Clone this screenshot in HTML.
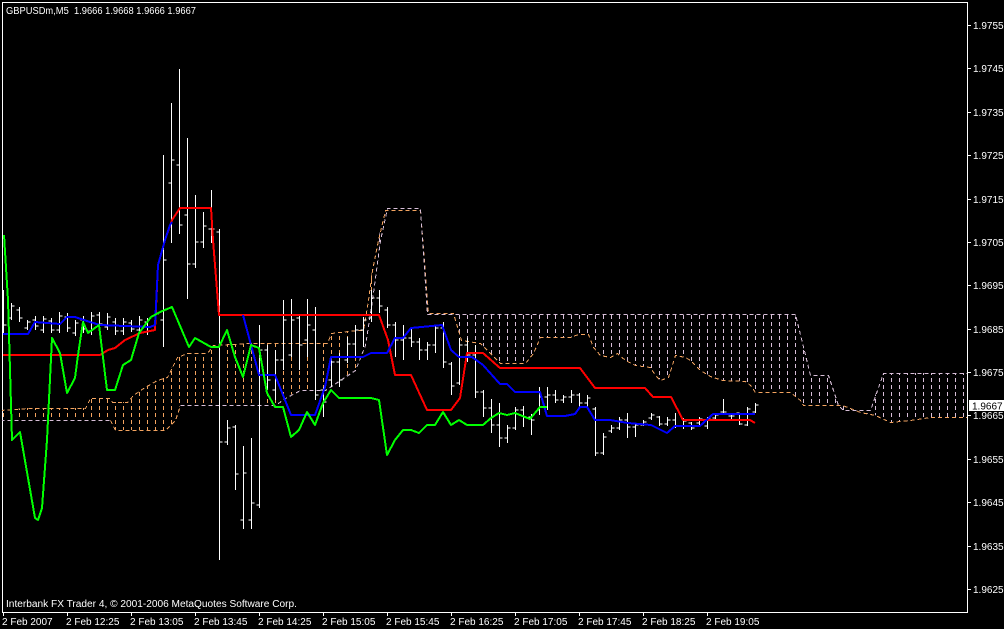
<!DOCTYPE html>
<html><head><meta charset="utf-8"><style>
html,body{margin:0;padding:0;background:#000;}
svg{display:block}
text{font-family:"Liberation Sans","DejaVu Sans",sans-serif;font-size:10px;fill:#fff}
</style></head><body>
<svg width="1004" height="629" viewBox="0 0 1004 629" xmlns="http://www.w3.org/2000/svg" shape-rendering="crispEdges">
<defs>
<pattern id="po" patternUnits="userSpaceOnUse" x="0" y="0" width="8" height="7"><line x1="3.5" y1="0" x2="3.5" y2="4" stroke="#f4a460" stroke-width="1"/></pattern>
<pattern id="pt" patternUnits="userSpaceOnUse" x="0" y="0" width="8" height="7"><line x1="3.5" y1="0" x2="3.5" y2="4" stroke="#d8bfd8" stroke-width="1"/></pattern>
<clipPath id="cl"><rect x="0" y="0" width="372" height="629"/></clipPath>
<clipPath id="cr"><rect x="372" y="0" width="600" height="629"/></clipPath>
<clipPath id="plot"><rect x="2" y="2" width="965" height="610"/></clipPath>
</defs>
<rect width="1004" height="629" fill="#000"/>
<path d="M2.5 2.5H967.5V612.5H2.5Z" fill="none" stroke="#fff"/>
<g clip-path="url(#plot)">
<g id="cloud">
<polygon clip-path="url(#cl)" fill="url(#po)" fill-rule="evenodd" points="0,410 28,408 85,408 90,398 110,398 112,402 127,402 133,395 143,388 157,380 167,377 177,357 187,353 207,353 213,345 250,343 327,343 331,333 357,330 363,330 368,300 372,270 378,240 385,210 420,210 428,313 453,313 461,340 480,343 500,363 525,363 533,353 540,337 570,337 578,334 588,334 593,347 600,355 610,357 617,353 625,360 635,365 650,367 655,375 660,380 668,377 675,355 685,357 690,360 700,370 710,376 722,380 745,381 750,385 755,392 790,392 800,400 803,405 842,405 850,408 860,412 875,415 890,422 910,420 930,417 968,417 968,373 883,373 870,410 843,410 838,405 828,375 810,375 795,314 427,314 420,208 387,208 380,240 372,300 365,345 355,370 340,380 325,390 300,390 285,398 275,405 180,405 175,420 165,430 115,430 110,420 0,420"/>
<polygon clip-path="url(#cr)" fill="url(#pt)" fill-rule="evenodd" points="0,410 28,408 85,408 90,398 110,398 112,402 127,402 133,395 143,388 157,380 167,377 177,357 187,353 207,353 213,345 250,343 327,343 331,333 357,330 363,330 368,300 372,270 378,240 385,210 420,210 428,313 453,313 461,340 480,343 500,363 525,363 533,353 540,337 570,337 578,334 588,334 593,347 600,355 610,357 617,353 625,360 635,365 650,367 655,375 660,380 668,377 675,355 685,357 690,360 700,370 710,376 722,380 745,381 750,385 755,392 790,392 800,400 803,405 842,405 850,408 860,412 875,415 890,422 910,420 930,417 968,417 968,373 883,373 870,410 843,410 838,405 828,375 810,375 795,314 427,314 420,208 387,208 380,240 372,300 365,345 355,370 340,380 325,390 300,390 285,398 275,405 180,405 175,420 165,430 115,430 110,420 0,420"/>
</g>
<g transform="translate(0.5,0.5)">
<polyline fill="none" stroke="#f4a460" stroke-dasharray="4,3" points="0,410 28,408 85,408 90,398 110,398 112,402 127,402 133,395 143,388 157,380 167,377 177,357 187,353 207,353 213,345 250,343 327,343 331,333 357,330 363,330 368,300 372,270 378,240 385,210 420,210 428,313 453,313 461,340 480,343 500,363 525,363 533,353 540,337 570,337 578,334 588,334 593,347 600,355 610,357 617,353 625,360 635,365 650,367 655,375 660,380 668,377 675,355 685,357 690,360 700,370 710,376 722,380 745,381 750,385 755,392 790,392 800,400 803,405 842,405 850,408 860,412 875,415 890,422 910,420 930,417 968,417"/>
<polyline fill="none" stroke="#d8bfd8" stroke-dasharray="4,3" points="0,420 110,420"/>
<polyline fill="none" stroke="#f4a460" stroke-dasharray="4,3" points="110,420 115,430 165,430 175,420 180,405"/>
<polyline fill="none" stroke="#d8bfd8" stroke-dasharray="4,3" points="180,405 275,405 285,398 300,390 325,390 340,380 355,370 365,345 372,300 380,240 387,208 420,208 427,314 795,314 810,375 828,375 838,405 843,410 870,410 883,373 968,373"/>
</g>
<path fill="none" stroke="#fff" stroke-width="1" d="
M3.5 290V335M0.5 305H3.5M3.5 325H6.5
M11.5 303V320M8.5 318H11.5M11.5 306H14.5
M19.5 307V322M16.5 310H19.5M19.5 318H22.5
M27.5 320V330M24.5 328H27.5M27.5 322H30.5
M35.5 316V330M32.5 320H35.5M35.5 326H38.5
M43.5 316V333M40.5 330H43.5M43.5 319H46.5
M51.5 318V333M48.5 321H51.5M51.5 330H54.5
M59.5 312V333M56.5 330H59.5M59.5 316H62.5
M67.5 313V332M64.5 317H67.5M67.5 328H70.5
M75.5 320V336M72.5 333H75.5M75.5 323H78.5
M83.5 316V333M80.5 320H83.5M83.5 329H86.5
M91.5 312V335M88.5 331H91.5M91.5 316H94.5
M99.5 312V328M96.5 315H99.5M99.5 324H102.5
M107.5 313V330M104.5 327H107.5M107.5 317H110.5
M115.5 318V335M112.5 322H115.5M115.5 331H118.5
M123.5 318V335M120.5 331H123.5M123.5 322H126.5
M131.5 320V332M128.5 323H131.5M131.5 329H134.5
M139.5 316V333M136.5 330H139.5M139.5 320H142.5
M147.5 318V335M144.5 322H147.5M147.5 331H150.5
M155.5 310V330M152.5 326H155.5M155.5 314H158.5
M163.5 155V347M160.5 320H163.5M163.5 260H166.5
M171.5 103V243M168.5 183H171.5M171.5 160H174.5
M179.5 69V234M176.5 165H179.5M179.5 225H182.5
M187.5 138V299M184.5 215H187.5M187.5 264H190.5
M195.5 195V268M192.5 264H195.5M195.5 242H198.5
M203.5 212V248M200.5 242H203.5M203.5 226H206.5
M211.5 190V243M208.5 229H211.5M211.5 229H214.5
M219.5 229V560M216.5 232H219.5M219.5 442H222.5
M227.5 420V445M224.5 442H227.5M227.5 428H230.5
M235.5 425V490M232.5 427H235.5M235.5 474H238.5
M243.5 446V529M240.5 520H243.5M243.5 473H246.5
M251.5 438V529M248.5 520H251.5M251.5 503H254.5
M259.5 325V508M256.5 505H259.5M259.5 350H262.5
M267.5 345V390M264.5 350H267.5M267.5 380H270.5
M275.5 350V400M272.5 390H275.5M275.5 360H278.5
M283.5 300V370M280.5 360H283.5M283.5 320H286.5
M291.5 299V357M288.5 355H291.5M291.5 320H294.5
M299.5 316V370M296.5 318H299.5M299.5 345H302.5
M307.5 299V357M304.5 340H307.5M307.5 325H310.5
M315.5 307V400M312.5 330H315.5M315.5 395H318.5
M323.5 387V417M320.5 390H323.5M323.5 402H326.5
M331.5 360V387M328.5 380H331.5M331.5 362H334.5
M339.5 353V387M336.5 362H339.5M339.5 380H342.5
M347.5 337V363M344.5 360H347.5M347.5 344H350.5
M355.5 325V357M352.5 344H355.5M355.5 330H358.5
M363.5 317V347M360.5 330H363.5M363.5 320H366.5
M371.5 290V322M368.5 318H371.5M371.5 298H374.5
M379.5 290V313M376.5 298H379.5M379.5 306H382.5
M387.5 307V328M384.5 310H387.5M387.5 325H390.5
M395.5 322V357M392.5 325H395.5M395.5 340H398.5
M403.5 325V360M400.5 340H403.5M403.5 338H406.5
M411.5 328V347M408.5 338H411.5M411.5 342H414.5
M419.5 338V360M416.5 342H419.5M419.5 350H422.5
M427.5 342V360M424.5 350H427.5M427.5 345H430.5
M435.5 325V353M432.5 345H435.5M435.5 328H438.5
M443.5 322V368M440.5 328H443.5M443.5 362H446.5
M451.5 362V395M448.5 364H451.5M451.5 386H454.5
M459.5 338V385M456.5 383H459.5M459.5 345H462.5
M467.5 338V362M464.5 345H467.5M467.5 355H470.5
M475.5 345V398M472.5 355H475.5M475.5 392H478.5
M483.5 390V417M480.5 392H483.5M483.5 408H486.5
M491.5 399V433M488.5 408H491.5M491.5 425H494.5
M499.5 403V447M496.5 425H499.5M499.5 438H502.5
M507.5 425V443M504.5 438H507.5M507.5 428H510.5
M515.5 407V430M512.5 428H515.5M515.5 410H518.5
M523.5 406V427M520.5 410H523.5M523.5 417H526.5
M531.5 414V435M528.5 417H531.5M531.5 420H534.5
M539.5 387V415M536.5 410H539.5M539.5 397H542.5
M547.5 387V410M544.5 397H547.5M547.5 395H550.5
M555.5 390V403M552.5 395H555.5M555.5 400H558.5
M563.5 395V403M560.5 400H563.5M563.5 397H566.5
M571.5 390V403M568.5 397H571.5M571.5 395H574.5
M579.5 393V407M576.5 395H579.5M579.5 403H582.5
M587.5 395V407M584.5 403H587.5M587.5 398H590.5
M595.5 407V456M592.5 409H595.5M595.5 453H598.5
M603.5 433V455M600.5 453H603.5M603.5 437H606.5
M611.5 425V433M608.5 431H611.5M611.5 428H614.5
M619.5 417V430M616.5 428H619.5M619.5 420H622.5
M627.5 413V438M624.5 420H627.5M627.5 427H630.5
M635.5 423V437M632.5 427H635.5M635.5 425H638.5
M643.5 420V426M640.5 425H643.5M643.5 422H646.5
M651.5 413V420M648.5 418H651.5M651.5 415H654.5
M659.5 416V426M656.5 417H659.5M659.5 424H662.5
M667.5 417V426M664.5 424H667.5M667.5 420H670.5
M675.5 413V428M672.5 420H675.5M675.5 426H678.5
M683.5 418V429M680.5 426H683.5M683.5 421H686.5
M691.5 422V430M688.5 423H691.5M691.5 428H694.5
M699.5 417V425M696.5 423H699.5M699.5 419H702.5
M707.5 417V429M704.5 426H707.5M707.5 419H710.5
M715.5 413V420M712.5 418H715.5M715.5 415H718.5
M723.5 399V413M720.5 412H723.5M723.5 412H726.5
M731.5 415V420M728.5 416H731.5M731.5 416H734.5
M739.5 413V425M736.5 413H739.5M739.5 424H742.5
M747.5 407V426M744.5 425H747.5M747.5 409H750.5
M755.5 403V413M752.5 412H755.5M755.5 405H758.5
"/>
<g stroke-width="2" fill="none" stroke-linejoin="round">
<polyline stroke="#ff0000" points="3,355 100,355 108,350 115,348 125,340 140,333 155,330 158,265 165,240 172,220 180,208 211,208 213,240 219,315 379,315 388,340 395,375 411,375 427,410 451,410 460,398 467,353 483,353 500,368 580,368 595,388 645,388 653,397 671,397 683,420 750,420 755,423"/>
<polyline stroke="#0000ff" points="3,334 28,334 35,322 60,324 67,317 75,317 90,322 100,325 150,327 155,325 158,265 165,240 170,225 172,222"/>
<polyline stroke="#0000ff" points="243,315 259,375 275,375 291,415 315,415 325,387 331,357 363,357 371,353 387,353 395,338 403,338 411,328 442,325 451,350 459,357 472,357 483,365 500,384 507,384 515,392 540,392 547,416 565,416 575,414 580,407 587,407 595,420 610,420 628,423 651,425 667,433 675,426 700,426 713,414 755,414"/>
<polyline stroke="#00ff00" points="4,235 8,300 12,440 20,432 35,518 38,520 42,508 47,440 52,338 60,353 67,393 75,378 78,355 83,322 88,333 99,325 107,390 115,390 123,365 131,360 139,333 151,317 160,312 172,307 189,347 195,338 211,347 219,347 227,330 235,357 243,377 251,345 259,348 267,393 275,407 283,407 291,437 299,430 307,412 315,425 323,403 331,390 339,398 371,398 379,400 387,455 395,440 403,430 411,430 419,433 427,425 435,425 443,412 451,425 459,420 467,425 483,425 491,418 499,413 507,415 515,413 530,419 540,407 547,407"/>
</g>
</g>
<g fill="none" stroke="#fff">
<path d="M967 25.5H971M967 68.5H971M967 112.5H971M967 155.5H971M967 199.5H971M967 242.5H971M967 285.5H971M967 329.5H971M967 372.5H971M967 415.5H971M967 459.5H971M967 502.5H971M967 546.5H971M967 589.5H971"/>
<path d="M3.5 612V616M67.5 612V616M131.5 612V616M195.5 612V616M259.5 612V616M323.5 612V616M387.5 612V616M451.5 612V616M515.5 612V616M579.5 612V616M643.5 612V616M707.5 612V616"/>
</g>
<g>
<text x="973" y="29">1.9755</text>
<text x="973" y="72">1.9745</text>
<text x="973" y="116">1.9735</text>
<text x="973" y="159">1.9725</text>
<text x="973" y="203">1.9715</text>
<text x="973" y="246">1.9705</text>
<text x="973" y="289">1.9695</text>
<text x="973" y="333">1.9685</text>
<text x="973" y="376">1.9675</text>
<text x="973" y="419">1.9665</text>
<text x="973" y="463">1.9655</text>
<text x="973" y="506">1.9645</text>
<text x="973" y="550">1.9635</text>
<text x="973" y="593">1.9625</text>
</g>
<rect x="969" y="400" width="35" height="11" fill="#fff"/>
<text x="972" y="409.5" style="fill:#000">1.9667</text>
<g>
<text x="2" y="625">2 Feb 2007</text>
<text x="66" y="625">2 Feb 12:25</text>
<text x="130" y="625">2 Feb 13:05</text>
<text x="194" y="625">2 Feb 13:45</text>
<text x="258" y="625">2 Feb 14:25</text>
<text x="322" y="625">2 Feb 15:05</text>
<text x="386" y="625">2 Feb 15:45</text>
<text x="450" y="625">2 Feb 16:25</text>
<text x="514" y="625">2 Feb 17:05</text>
<text x="578" y="625">2 Feb 17:45</text>
<text x="642" y="625">2 Feb 18:25</text>
<text x="706" y="625">2 Feb 19:05</text>
</g>
<text x="6" y="14" textLength="190" lengthAdjust="spacingAndGlyphs">GBPUSDm,M5&#160; 1.9666 1.9668 1.9666 1.9667</text>
<text x="6" y="607" textLength="291" lengthAdjust="spacingAndGlyphs">Interbank FX Trader 4, © 2001-2006 MetaQuotes Software Corp.</text>
</svg>
</body></html>
